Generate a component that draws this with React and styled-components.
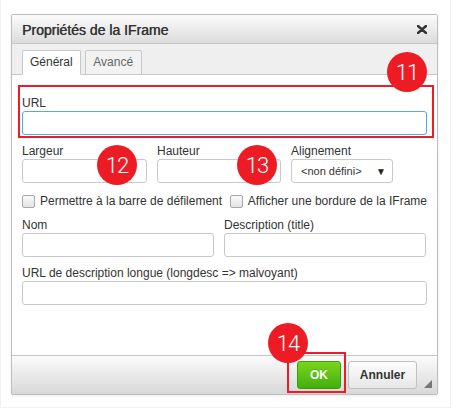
import React from "react";
import styled, { createGlobalStyle } from "styled-components";

const GlobalStyle = createGlobalStyle`
  html, body {
    margin: 0;
    padding: 0;
    background: #fff;
  }
  body {
    font-family: "Liberation Sans", Arial, sans-serif;
    font-size: 12px;
    color: #333;
  }
`;

const App = () => {
  return (
    <>
      <GlobalStyle />
      <Frame>
        <Dialog>
          <TitleBar>
            <Title>Propriétés de la IFrame</Title>
            <CloseIcon viewBox="0 0 10 9" width="10" height="9">
              <path d="M1 1 L9 8 M9 1 L1 8" stroke="#333" strokeWidth="2.4" strokeLinecap="round" />
            </CloseIcon>
          </TitleBar>

          <TabStrip>
            <Tab active>Général</Tab>
            <Tab>Avancé</Tab>
          </TabStrip>

          <Body>
            <Field>
              <Label>URL</Label>
              <TextBox focused />
            </Field>

            <Row>
              <Field width={125}>
                <Label>Largeur</Label>
                <TextBox />
              </Field>
              <Field width={124}>
                <Label>Hauteur</Label>
                <TextBox />
              </Field>
              <Field width={102}>
                <Label>Alignement</Label>
                <SelectBox>
                  <span>&lt;non défini&gt;</span>
                  <Arrow>▼</Arrow>
                </SelectBox>
              </Field>
            </Row>

            <CheckRow>
              <Check width={210}>
                <CheckBox />
                Permettre à la barre de défilement
              </Check>
              <Check>
                <CheckBox />
                Afficher une bordure de la IFrame
              </Check>
            </CheckRow>

            <Row>
              <Field width={192}>
                <Label>Nom</Label>
                <TextBox />
              </Field>
              <Field width={202}>
                <Label>Description (title)</Label>
                <TextBox />
              </Field>
            </Row>

            <Field>
              <Label>URL de description longue (longdesc =&gt; malvoyant)</Label>
              <TextBox />
            </Field>
          </Body>

          <Footer>
            <OkButton>OK</OkButton>
            <CancelButton>Annuler</CancelButton>
            <Grip viewBox="0 0 8 8" width="8" height="8">
              <polygon points="8,0 8,8 0,8" fill="#777" />
            </Grip>
          </Footer>

          {/* annotations */}
          <Highlight left={6} top={70} w={416} h={53} />
          <Highlight left={275} top={337} w={59} h={41} />
          <Badge left={375} top={37}>11</Badge>
          <Badge left={85} top={130}>12</Badge>
          <Badge left={225} top={130}>13</Badge>
          <Badge left={256} top={308}>14</Badge>
        </Dialog>
      </Frame>
    </>
  );
};

export default App;

const Frame = styled.div`
  width: 451px;
  height: 408px;
  box-sizing: border-box;
  border: 1px solid #f1f1f1;
  border-top: none;
  padding: 14px 0 0 10px;
`;

const Dialog = styled.div`
  position: relative;
  width: 427px;
  height: 381px;
  box-sizing: border-box;
  border: 1px solid #bdbdbd;
  border-radius: 2px;
  background: #fff;
  box-shadow: 0 1px 3px rgba(0, 0, 0, 0.08);
  display: flex;
  flex-direction: column;
`;

const TitleBar = styled.div`
  height: 28px;
  flex: none;
  border-bottom: 1px solid #c6c6c6;
  background: linear-gradient(#fbfbfb, #dcdcdc);
  display: flex;
  align-items: center;
  justify-content: space-between;
  padding: 0 10px 0 10px;
`;

const Title = styled.span`
  font-size: 14px;
  font-weight: normal;
  color: #333;
  text-shadow: 0.4px 0 0 #444;
  padding-top: 1px;
`;

const CloseIcon = styled.svg`
  display: block;
`;

const TabStrip = styled.div`
  flex: none;
  height: 25px;
  padding: 5px 0 0 10px;
  background: #efefef;
  border-bottom: 1px solid #c6c6c6;
  display: flex;
  gap: 4px;
  align-items: flex-end;
`;

const Tab = styled.div`
  height: 25px;
  box-sizing: border-box;
  padding: 0 7px;
  margin-bottom: -1px;
  border: 1px solid #c6c6c6;
  border-bottom: ${(p) => (p.active ? "1px solid #fff" : "1px solid #c6c6c6")};
  border-radius: 2px 2px 0 0;
  background: ${(p) => (p.active ? "#fff" : "#f2f2f2")};
  color: ${(p) => (p.active ? "#333" : "#666")};
  font-size: 12px;
  line-height: 23px;
  text-align: center;
  min-width: ${(p) => (p.active ? "58px" : "57px")};
`;

const Body = styled.div`
  flex: 1;
  padding: 20px 10px 0 10px;
  display: flex;
  flex-direction: column;
  gap: 8px;
`;

const Field = styled.div`
  display: flex;
  flex-direction: column;
  width: ${(p) => (p.width ? `${p.width}px` : "auto")};
  flex: none;
`;

const Label = styled.div`
  font-size: 12px;
  line-height: 16px;
  color: #333;
  white-space: nowrap;
`;

const TextBox = styled.div`
  height: 24px;
  box-sizing: border-box;
  border: 1px solid ${(p) => (p.focused ? "#52a8ec" : "#c9c9c9")};
  border-radius: 3px;
  background: #fff;
`;

const SelectBox = styled.div`
  height: 24px;
  box-sizing: border-box;
  border: 1px solid #c9c9c9;
  border-radius: 3px;
  background: #fff;
  display: flex;
  align-items: center;
  justify-content: space-between;
  padding: 0 6px 0 9px;
  font-size: 11px;
  color: #333;
`;

const Arrow = styled.span`
  font-size: 10px;
  color: #222;
`;

const Row = styled.div`
  display: flex;
  gap: 10px;
`;

const CheckRow = styled.div`
  display: flex;
  margin-top: 2px;
  height: 16px;
  align-items: center;
`;

const Check = styled.label`
  display: flex;
  align-items: center;
  gap: 5px;
  width: ${(p) => (p.width ? `${p.width}px` : "auto")};
  font-size: 12px;
  color: #333;
  white-space: nowrap;
`;

const CheckBox = styled.span`
  width: 11px;
  height: 11px;
  border: 1px solid #a8a8a8;
  border-radius: 2px;
  background: linear-gradient(#fafafa, #e2e2e2);
  flex: none;
`;

const Footer = styled.div`
  flex: none;
  height: 38px;
  border-top: 1px solid #c6c6c6;
  background: linear-gradient(#fbfbfb, #d8d8d8);
  display: flex;
  align-items: center;
  justify-content: flex-end;
  gap: 7px;
  padding-right: 6px;
  position: relative;
`;

const OkButton = styled.div`
  width: 44px;
  height: 28px;
  box-sizing: border-box;
  border: 1px solid #3e9a10;
  border-radius: 3px;
  background: linear-gradient(#7ad61d, #42ae0f);
  color: #fff;
  font-weight: bold;
  font-size: 12px;
  display: flex;
  align-items: center;
  justify-content: center;
  text-shadow: 0 -1px 0 rgba(0, 0, 0, 0.15);
`;

const CancelButton = styled.div`
  width: 69px;
  height: 28px;
  box-sizing: border-box;
  border: 1px solid #c0c0c0;
  border-radius: 3px;
  background: linear-gradient(#fdfdfd, #e6e6e6);
  color: #333;
  font-weight: bold;
  font-size: 12px;
  display: flex;
  align-items: center;
  justify-content: center;
  margin-right: 14px;
`;

const Grip = styled.svg`
  position: absolute;
  right: 5px;
  bottom: 6px;
`;

const Highlight = styled.div`
  position: absolute;
  left: ${(p) => p.left}px;
  top: ${(p) => p.top}px;
  width: ${(p) => p.w}px;
  height: ${(p) => p.h}px;
  box-sizing: border-box;
  border: 2px solid #ee1c25;
  pointer-events: none;
`;

const Badge = styled.div`
  position: absolute;
  left: ${(p) => p.left}px;
  top: ${(p) => p.top}px;
  width: 40px;
  height: 40px;
  border-radius: 50%;
  background: #ed1c24;
  color: #fff;
  font-family: Roboto, "Liberation Sans", sans-serif;
  font-weight: 300;
  font-size: 22px;
  letter-spacing: -1px;
  display: flex;
  align-items: center;
  justify-content: center;
`;
